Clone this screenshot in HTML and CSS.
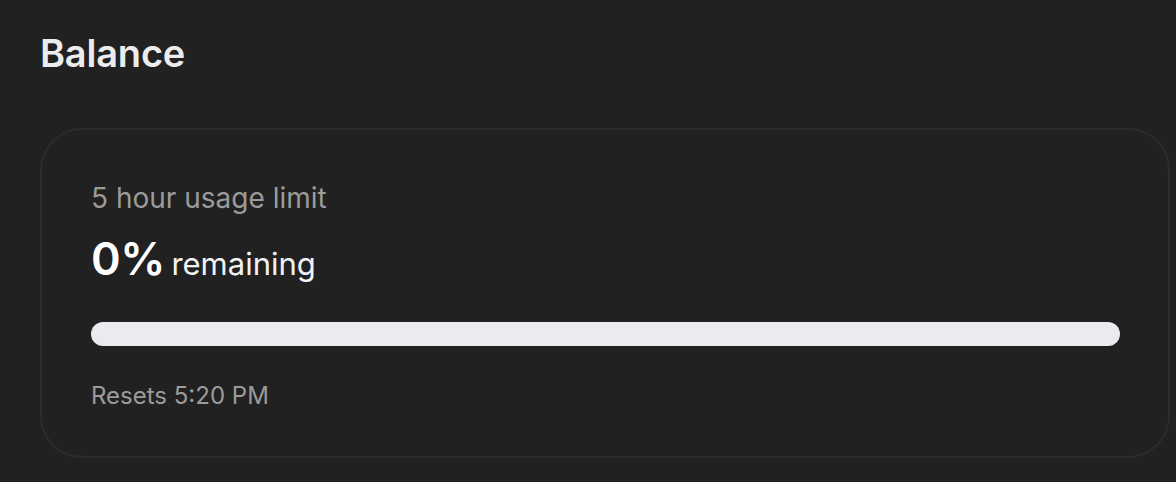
FILE: index.html
```html
<!DOCTYPE html>
<html lang="en">
<head>
<meta charset="utf-8">
<title>Balance</title>
<link rel="stylesheet" href="styles.css">
</head>
<body>
<main class="page">
  <h1 class="title">Balance</h1>
  <section class="card">
    <div class="label">5 hour usage limit</div>
    <div class="amount"><span class="pct">0%</span> <span class="rem">remaining</span></div>
    <div class="bar"><div class="bar-fill" style="width:0%"></div></div>
    <div class="reset">Resets 5:20 PM</div>
  </section>
</main>
</body>
</html>
```

FILE: styles.css
```css
html, body {
  margin: 0;
  padding: 0;
  background: #212121;
  height: 100%;
}
body {
  font-family: Inter, "Noto Sans", sans-serif;
  color: #ececec;
  overflow: hidden;
}
.page {
  padding: 28px 6px 0 40px;
  display: flex;
  flex-direction: column;
}
.title {
  margin: 0;
  font-size: 38px;
  line-height: 50px;
  font-weight: 600;
  color: #ececec;
  letter-spacing: -0.2px;
}
.card {
  margin-top: 50px;
  height: 330px;
  box-sizing: border-box;
  border: 2px solid #2c2c2c;
  border-radius: 42px;
  padding: 51px 48px 0 49px;
  display: flex;
  flex-direction: column;
}
.label {
  font-size: 28px;
  line-height: 34px;
  color: #9b9b9b;
}
.amount {
  margin-top: 22px;
  line-height: 44px;
  color: #fff;
}
.pct {
  font-size: 45px;
  font-weight: 600;
  letter-spacing: -0.5px;
}
.rem {
  margin-left: 2px;
  font-size: 31px;
  color: #f2f2f2;
}
.bar {
  margin-top: 31px;
  height: 24px;
  border-radius: 12px;
  background: #ebebef;
  overflow: hidden;
}
.bar-fill {
  height: 100%;
  background: #ffffff;
}
.reset {
  margin-top: 35px;
  font-size: 24px;
  line-height: 30px;
  color: #9b9b9b;
}
```
